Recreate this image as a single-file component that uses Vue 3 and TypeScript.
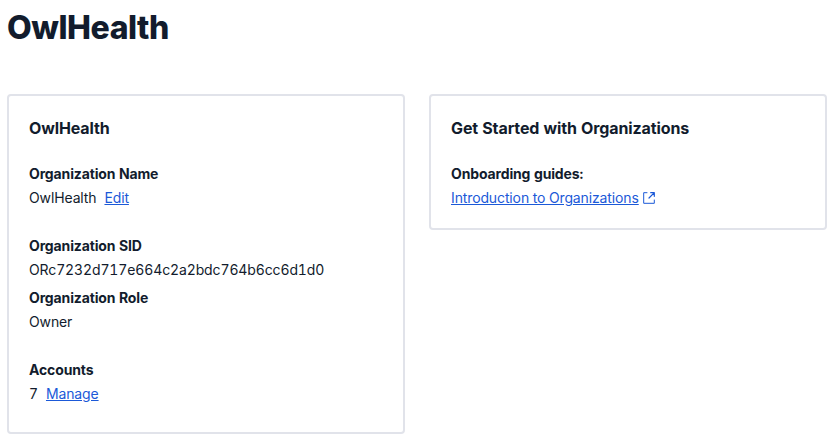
<script setup lang="ts">
interface Detail {
  label: string
  value: string
  action?: string
}
const groups: Detail[][] = [
  [{ label: 'Organization Name', value: 'OwlHealth', action: 'Edit' }],
  [
    { label: 'Organization SID', value: 'ORc7232d717e664c2a2bdc764b6cc6d1d0' },
    { label: 'Organization Role', value: 'Owner' },
  ],
  [{ label: 'Accounts', value: '7', action: 'Manage' }],
]
</script>

<template>
  <main class="page">
    <h1 class="title">OwlHealth</h1>
    <div class="cards">
      <section class="card">
        <h2 class="heading">OwlHealth</h2>
        <div class="groups">
          <div v-for="(group, i) in groups" :key="i" class="group">
            <dl v-for="item in group" :key="item.label" class="detail">
              <dt class="label">{{ item.label }}</dt>
              <dd class="value">
                <span>{{ item.value }}</span>
                <a v-if="item.action" href="#" class="link">{{ item.action }}</a>
              </dd>
            </dl>
          </div>
        </div>
      </section>
      <section class="card">
        <h2 class="heading">Get Started with Organizations</h2>
        <div class="detail">
          <div class="label">Onboarding guides:</div>
          <div class="guide">
            <a href="#" class="link">Introduction to Organizations</a>
            <svg class="icon" viewBox="0 0 12 12" fill="none" aria-hidden="true">
              <path d="M4 .7H.7v10.600h10.600V8" stroke="currentColor" stroke-width="1" stroke-linecap="round" stroke-linejoin="round" />
              <path d="M7.700 .7h3.600v3.600M11.100 .9L6 6" stroke="currentColor" stroke-width="1.200" stroke-linecap="round" stroke-linejoin="round" />
            </svg>
          </div>
        </div>
      </section>
    </div>
  </main>
</template>

<style>
body {
  background: #fff;
}
</style>

<style scoped>
.page {
  padding: 6px 7px 8px;
  color: #121c2d;
  font-family: Inter, sans-serif;
  font-size: 14px;
  line-height: 24px;
  letter-spacing: -0.125px;
  font-variant-numeric: tabular-nums;
}
.title {
  margin: 0 0 44px;
  font-size: 32px;
  line-height: 44px;
  font-weight: 800;
  letter-spacing: -0.45px;
}
.cards {
  display: grid;
  grid-template-columns: 398px 398px;
  gap: 24px;
  align-items: start;
}
.card {
  box-sizing: border-box;
  padding: 20px 20px 18px;
  border: 2px solid #e1e3ea;
  border-radius: 4px;
}
.card:first-child {
  padding-bottom: 26px;
}
.heading {
  margin: 0 0 22px;
  font-size: 16px;
  line-height: 24px;
  font-weight: 700;
  letter-spacing: -0.11px;
}
.groups {
  display: flex;
  flex-direction: column;
  gap: 24px;
}
.group {
  display: flex;
  flex-direction: column;
  gap: 4px;
}
.detail {
  margin: 0;
}
.label {
  font-weight: 700;
  letter-spacing: -0.14px;
}
.value {
  display: flex;
  gap: 8px;
  margin: 0;
}
.link {
  color: #1b59d8;
  text-decoration: underline;
}
.guide {
  display: flex;
  align-items: center;
  gap: 4px;
  color: #1b59d8;
}
.icon {
  width: 12px;
  height: 12px;
}
</style>
